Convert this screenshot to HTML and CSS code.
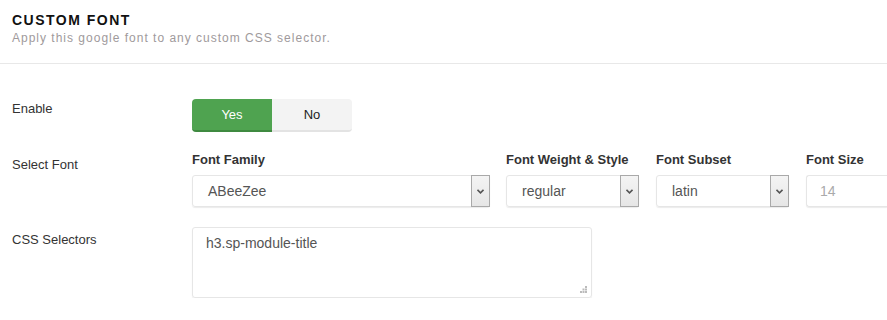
FILE: index.html
```html
<!DOCTYPE html>
<html lang="en">
<head>
    <meta charset="UTF-8">
    <meta name="viewport" content="width=device-width, initial-scale=1.0">
    <title>Custom Font</title>
    <link rel="stylesheet" href="styles.css">
</head>
<body>
    <div class="panel-head">
        <h3 class="panel-title">CUSTOM FONT</h3>
        <p class="panel-desc">Apply this google font to any custom CSS selector.</p>
    </div>

    <div class="panel-body">
        <div class="row row-enable">
            <div class="row-label">Enable</div>
            <div class="row-control">
                <div class="toggle">
                    <span class="toggle-btn active">Yes</span>
                    <span class="toggle-btn">No</span>
                </div>
            </div>
        </div>

        <div class="row row-font">
            <div class="row-label label-font">Select Font</div>
            <div class="row-control fields">
                <div class="field field-family">
                    <div class="field-label">Font Family</div>
                    <div class="select">
                        <span class="select-value">ABeeZee</span>
                        <span class="select-arrow">
                            <svg width="7" height="5" viewBox="0 0 7 5"><path d="M0.5 0.8 L3.5 3.8 L6.5 0.8" fill="none" stroke="#555" stroke-width="1.6"/></svg>
                        </span>
                    </div>
                </div>
                <div class="field field-small">
                    <div class="field-label">Font Weight &amp; Style</div>
                    <div class="select">
                        <span class="select-value">regular</span>
                        <span class="select-arrow">
                            <svg width="7" height="5" viewBox="0 0 7 5"><path d="M0.5 0.8 L3.5 3.8 L6.5 0.8" fill="none" stroke="#555" stroke-width="1.6"/></svg>
                        </span>
                    </div>
                </div>
                <div class="field field-small">
                    <div class="field-label">Font Subset</div>
                    <div class="select">
                        <span class="select-value">latin</span>
                        <span class="select-arrow">
                            <svg width="7" height="5" viewBox="0 0 7 5"><path d="M0.5 0.8 L3.5 3.8 L6.5 0.8" fill="none" stroke="#555" stroke-width="1.6"/></svg>
                        </span>
                    </div>
                </div>
                <div class="field field-size">
                    <div class="field-label">Font Size</div>
                    <div class="input"><span class="placeholder">14</span></div>
                </div>
            </div>
        </div>

        <div class="row row-css">
            <div class="row-label label-css">CSS Selectors</div>
            <div class="row-control">
                <div class="textarea">
                    h3.sp-module-title
                    <svg class="grip" width="7" height="7" viewBox="0 0 7 7">
                        <rect x="5" y="0" width="2" height="2" fill="#bbb"/>
                        <rect x="2.5" y="2.5" width="2" height="2" fill="#bbb"/>
                        <rect x="5" y="2.5" width="2" height="2" fill="#bbb"/>
                        <rect x="0" y="5" width="2" height="2" fill="#bbb"/>
                        <rect x="2.5" y="5" width="2" height="2" fill="#bbb"/>
                        <rect x="5" y="5" width="2" height="2" fill="#bbb"/>
                    </svg>
                </div>
            </div>
        </div>
    </div>
</body>
</html>
```

FILE: styles.css
```css
html, body {
    overflow: hidden;
}
body {
    font-family: "Liberation Sans", Arial, sans-serif;
    background-color: #fff;
    color: #333;
    margin: 0;
    font-size: 13px;
}
.panel-head {
    padding: 11px 12px 0;
    height: 52px;
    border-bottom: 1px solid #e8e8e8;
}
.panel-title {
    margin: 0;
    font-size: 14px;
    line-height: 18px;
    font-weight: bold;
    letter-spacing: 1.5px;
    color: #111;
}
.panel-desc {
    margin: 1px 0 0;
    font-size: 12px;
    line-height: 16px;
    letter-spacing: 1px;
    color: #a09a9c;
}
.panel-body {
    padding: 35px 0 0 12px;
}
.row {
    display: grid;
    grid-template-columns: 180px 1fr;
}
.row-label {
    line-height: 18px;
    padding-top: 1px;
    color: #333;
}
.row-font {
    margin-top: 19px;
}
.row-css {
    margin-top: 20px;
}
.label-font {
    padding-top: 5px;
}
.label-css {
    padding-top: 4px;
}
.toggle {
    display: flex;
    width: 160px;
    height: 33px;
}
.toggle-btn {
    flex: 1;
    display: flex;
    align-items: center;
    justify-content: center;
    font-size: 13px;
    background-color: #f3f3f3;
    border-bottom: 2px solid #e3e3e3;
    box-sizing: border-box;
    color: #222;
    border-radius: 0 4px 4px 0;
}
.toggle-btn.active {
    background-color: #4fa350;
    border-bottom-color: #3f8a40;
    color: #fff;
    border-radius: 4px 0 0 4px;
}
.fields {
    display: flex;
    gap: 17px;
}
.field-label {
    font-weight: bold;
    line-height: 18px;
    margin-bottom: 6px;
    white-space: nowrap;
}
.field-family {
    width: 298px;
    margin-right: -1px;
}
.field-small {
    width: 133px;
    flex-shrink: 0;
}
.field-size {
    flex: 1;
    min-width: 0;
}
.select, .input {
    display: flex;
    height: 32px;
    box-sizing: border-box;
    border: 1px solid #e6e6e6;
    border-radius: 3px;
    box-shadow: 0 1px 1px rgba(0, 0, 0, 0.08);
    font-size: 14px;
    color: #555;
}
.select-value {
    flex: 1;
    display: flex;
    align-items: center;
    padding-left: 15px;
}
.select-arrow {
    width: 17px;
    margin: -1px -1px -1px 0;
    display: flex;
    align-items: center;
    justify-content: center;
    border: 1px solid #a9a9a9;
    background: linear-gradient(#f4f4f4, #e6e6e6);
}
.input {
    align-items: center;
    padding-left: 13px;
    border-right: none;
    border-radius: 3px 0 0 3px;
}
.placeholder {
    color: #aaa;
}
.textarea {
    position: relative;
    width: 400px;
    height: 71px;
    box-sizing: border-box;
    border: 1px solid #e6e6e6;
    border-radius: 3px;
    box-shadow: 0 1px 1px rgba(0, 0, 0, 0.08);
    padding: 6px 13px;
    font-size: 14px;
    line-height: 18px;
    color: #555;
}
.grip {
    position: absolute;
    right: 4px;
    bottom: 4px;
}
```
